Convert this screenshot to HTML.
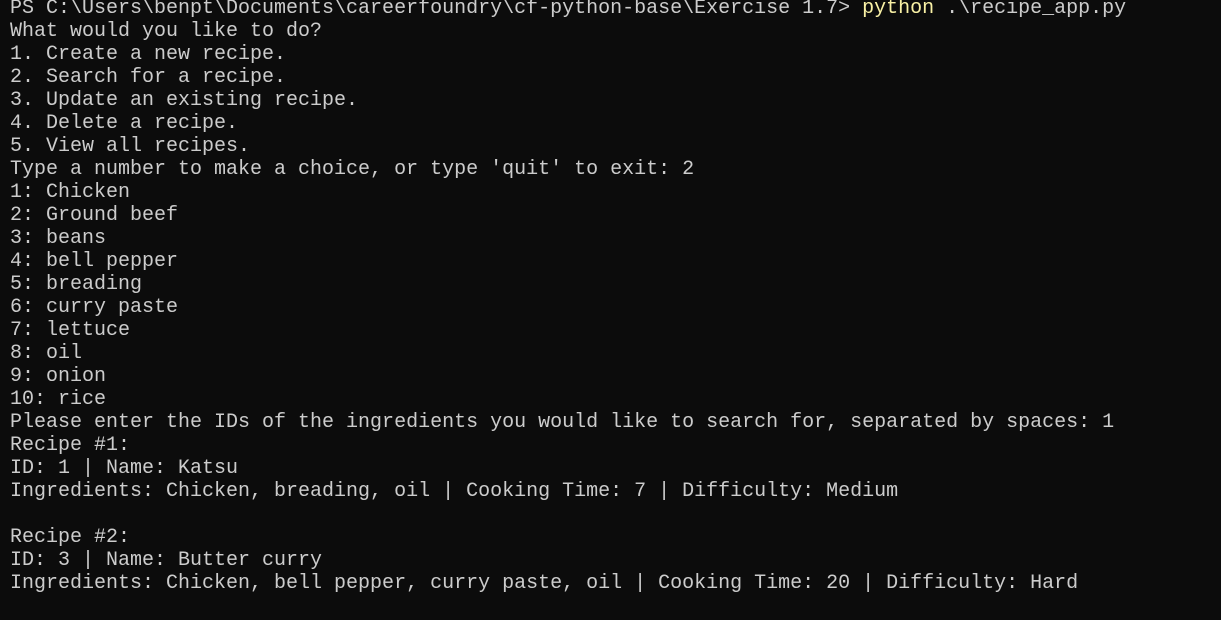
<!DOCTYPE html>
<html><head><meta charset="utf-8"><style>
html,body{margin:0;padding:0;background:#0c0c0c;width:1221px;height:620px;overflow:hidden}
pre{margin:0;position:absolute;left:10px;top:-3px;font-family:"Liberation Mono",monospace;font-size:20px;line-height:23px;color:#cccccc;white-space:pre}
.y{color:#f9f1a5}
</style></head><body><pre>PS C:\Users\benpt\Documents\careerfoundry\cf-python-base\Exercise 1.7&gt; <span class="y">python</span> .\recipe_app.py
What would you like to do?
1. Create a new recipe.
2. Search for a recipe.
3. Update an existing recipe.
4. Delete a recipe.
5. View all recipes.
Type a number to make a choice, or type 'quit' to exit: 2
1: Chicken
2: Ground beef
3: beans
4: bell pepper
5: breading
6: curry paste
7: lettuce
8: oil
9: onion
10: rice
Please enter the IDs of the ingredients you would like to search for, separated by spaces: 1
Recipe #1:
ID: 1 | Name: Katsu
Ingredients: Chicken, breading, oil | Cooking Time: 7 | Difficulty: Medium

Recipe #2:
ID: 3 | Name: Butter curry
Ingredients: Chicken, bell pepper, curry paste, oil | Cooking Time: 20 | Difficulty: Hard
</pre></body></html>
